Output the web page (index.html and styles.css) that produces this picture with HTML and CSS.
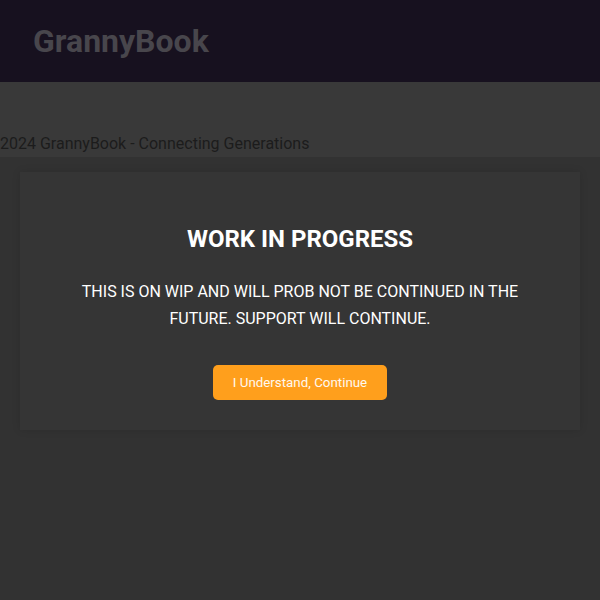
FILE: index.html
```html
<!DOCTYPE html>
<html lang="en">
<head>
<meta charset="utf-8">
<title>GrannyBook</title>
<link rel="stylesheet" href="styles.css">
</head>
<body>
<header class="site-header">
  <div class="logo">GrannyBook</div>
</header>
<footer class="site-footer">
  <p class="copy">2024 GrannyBook - Connecting Generations</p>
</footer>
<div class="modal-area">
  <div class="modal">
    <h2 class="modal-title">WORK IN PROGRESS</h2>
    <p class="modal-text">THIS IS ON WIP AND WILL PROB NOT BE CONTINUED IN THE FUTURE. SUPPORT WILL CONTINUE.</p>
    <button class="modal-btn" type="button">I Understand, Continue</button>
  </div>
</div>
</body>
</html>
```

FILE: styles.css
```css
html, body {
  margin: 0;
  padding: 0;
  height: 100%;
}
body {
  background: #323232;
  font-family: Roboto, "Liberation Sans", sans-serif;
  display: flex;
  flex-direction: column;
}
.site-header {
  height: 82px;
  background: #17111f;
  display: flex;
  align-items: center;
  padding-left: 33px;
  flex-shrink: 0;
}
.logo {
  font-size: 32px;
  font-weight: 700;
  color: #48464c;
}
.site-footer {
  height: 75px;
  background: #393939;
  display: flex;
  align-items: flex-end;
  flex-shrink: 0;
}
.copy {
  margin: 0 0 4px 0;
  font-size: 16px;
  color: #1c1c1c;
}
.modal-area {
  flex: 1;
  padding-top: 15px;
}
.modal {
  max-width: 560px;
  margin: 0 auto;
  box-sizing: border-box;
  background: #353535;
  box-shadow: 0 0 8px rgba(0, 0, 0, 0.12);
  padding: 53px 40px 30px;
  text-align: center;
  color: #ffffff;
}
.modal-title {
  margin: 0 0 25px 0;
  font-size: 24px;
  font-weight: 700;
}
.modal-text {
  margin: 0;
  font-size: 16px;
  line-height: 27px;
}
.modal-btn {
  margin-top: 33px;
  background: #ff9f1c;
  color: #fff8ee;
  border: none;
  border-radius: 5px;
  padding: 0 20px;
  height: 35px;
  font-family: Roboto, "Liberation Sans", sans-serif;
  font-size: 13.333px;
  cursor: pointer;
}
```
